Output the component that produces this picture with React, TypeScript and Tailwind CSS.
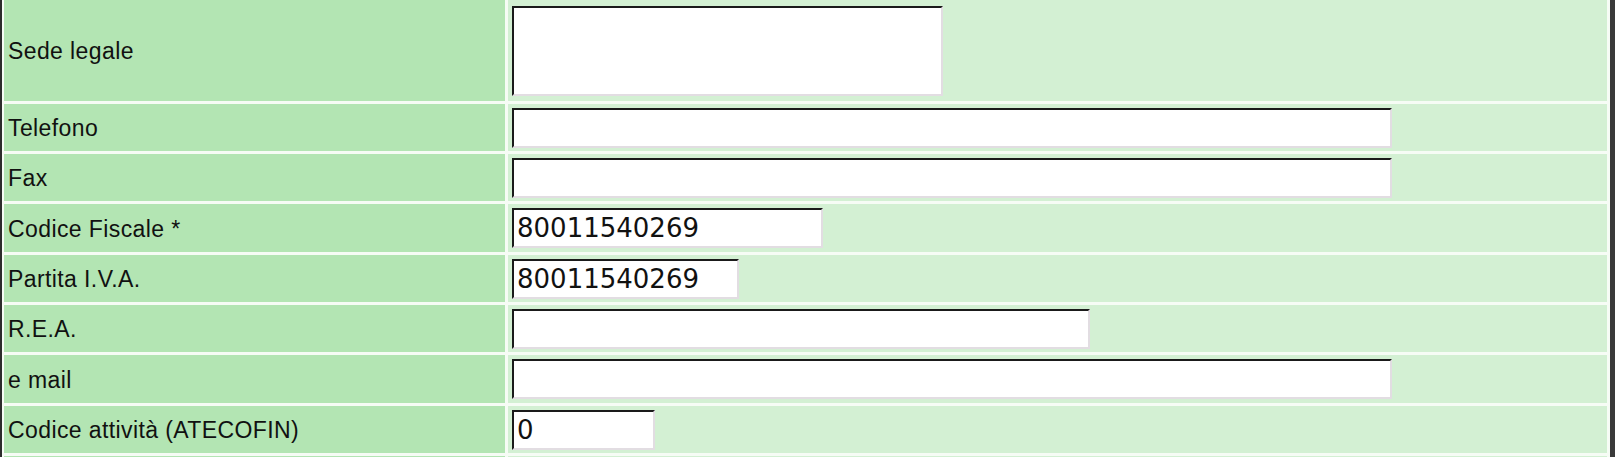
import React from "react";

type Field = {
  label: string;
  value?: string;
  width: string;
  height: string;
  tall?: boolean;
};

const fields: Field[] = [
  { label: "Sede legale", width: "w-[431px]", height: "h-[101px]", tall: true },
  { label: "Telefono", width: "w-[880px]", height: "h-[47px]" },
  { label: "Fax", width: "w-[880px]", height: "h-[47px]" },
  { label: "Codice Fiscale *", value: "80011540269", width: "w-[311px]", height: "h-[48px]" },
  { label: "Partita I.V.A.", value: "80011540269", width: "w-[227px]", height: "h-[47px]" },
  { label: "R.E.A.", width: "w-[578px]", height: "h-[47px]" },
  { label: "e mail", width: "w-[880px]", height: "h-[48px]" },
  { label: "Codice attività (ATECOFIN)", value: "0", width: "w-[143px]", height: "h-[47px]" },
];

const inputBorder =
  "border-2 border-t-[#1a1a1a] border-l-[#1a1a1a] border-r-[#e2dde2] border-b-[#e2dde2] bg-white outline-none";

export default function App() {
  return (
    <div className="w-[1615px] h-[457px] overflow-hidden bg-[#f6fcf5]">
      <div className="flex flex-col gap-[3px] border-l-[2px] border-r-[5px] border-l-[#2c2c2c] border-r-[#3a3a3a] pl-[2px] pr-[3px]">
        {fields.map((f) => (
          <div key={f.label} className={`flex gap-[3px] ${f.height}`}>
            <div className="w-[501px] shrink-0 flex items-center pl-[4px] pt-[2px] bg-[#b3e5b3] text-[#111] text-[23px] tracking-[0.4px] font-['Liberation_Sans',Arial,sans-serif]">
              {f.label}
            </div>
            <div className="flex-1 flex items-center pl-[4px] bg-[#d3f0d3]">
              {f.tall ? (
                <textarea
                  readOnly
                  className={`${f.width} h-[90px] resize-none ${inputBorder}`}
                />
              ) : (
                <input
                  readOnly
                  value={f.value ?? ""}
                  className={`${f.width} h-[40px] px-[3px] text-[26px] text-[#111] font-['DejaVu_Sans',sans-serif] ${inputBorder}`}
                />
              )}
            </div>
          </div>
        ))}
        <div className="flex gap-[3px] h-[47px]">
          <div className="w-[501px] shrink-0 bg-[#b3e5b3]" />
          <div className="flex-1 bg-[#d3f0d3]" />
        </div>
      </div>
    </div>
  );
}
